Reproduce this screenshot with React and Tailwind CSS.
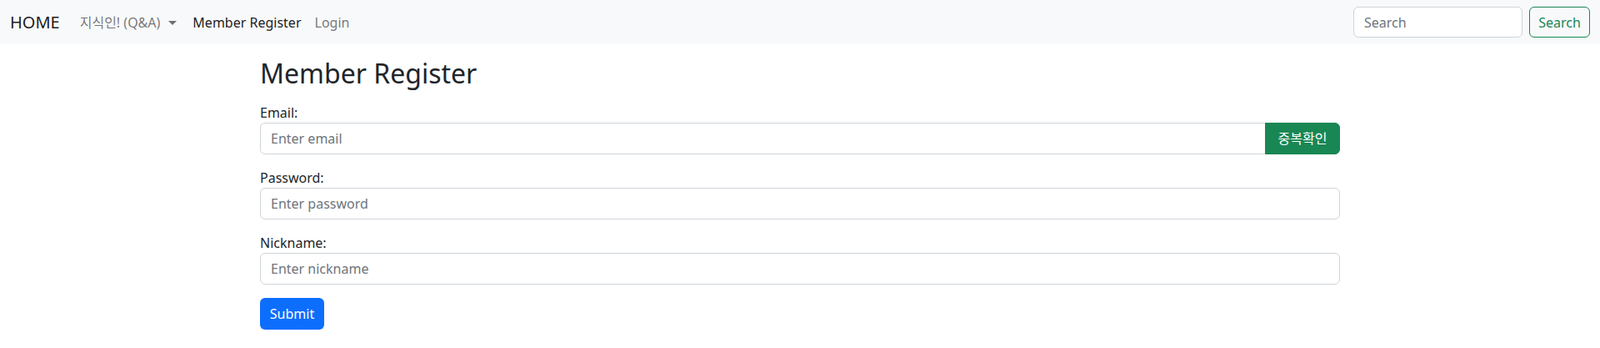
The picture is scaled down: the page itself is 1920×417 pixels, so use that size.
import React from 'react'

const font = { fontFamily: '"Noto Sans", "Noto Sans CJK KR", sans-serif' }

const Field = ({ label, placeholder, type = 'text', children }) => (
    <div className="mb-4">
        <label className="block text-base leading-6 text-[#212529]">{label}</label>
        <div className="flex">
            <input
                type={type}
                placeholder={placeholder}
                className={`h-[38px] flex-1 min-w-0 border border-[#ced4da] bg-white px-3 text-base text-[#212529] placeholder:text-[#6c757d] outline-none ${
                    children ? 'rounded-l-[6px]' : 'rounded-[6px]'
                }`}
            />
            {children}
        </div>
    </div>
)

export default function App() {
    return (
        <div className="min-h-[417px] bg-white" style={font}>
            <nav className="flex h-[53px] items-center justify-between bg-[#f8f9fa] px-3">
                <div className="flex items-center">
                    <a className="mr-4 text-[20px] leading-[30px] text-black/90">HOME</a>
                    <ul className="flex items-center text-base leading-6">
                        <li className="px-2 text-black/55">
                            지식인! (Q&amp;A)
                            <span className="ml-[10px] inline-block border-x-[5px] border-t-[5px] border-b-0 border-x-transparent align-[3px]" />
                        </li>
                        <li className="pl-[11px] pr-2 text-black/90">Member Register</li>
                        <li className="px-2 text-black/55">Login</li>
                    </ul>
                </div>
                <form className="flex items-center gap-2">
                    <input
                        placeholder="Search"
                        className="h-[37px] w-[203px] rounded-[6px] border border-[#ced4da] bg-white px-3 text-base placeholder:text-[#6c757d] outline-none"
                    />
                    <button
                        type="button"
                        className="h-[37px] w-[73px] rounded-[6px] border border-[#198754] text-base text-[#198754]"
                    >
                        Search
                    </button>
                </form>
            </nav>

            <div className="mx-auto w-[1296px] pt-4">
                <h2 className="mb-4 text-[32px] leading-[38px] font-normal text-[#212529]">Member Register</h2>
                <form>
                    <Field label="Email:" placeholder="Enter email" type="email">
                        <button
                            type="button"
                            className="-ml-px h-[38px] w-[90px] rounded-r-[6px] border border-[#198754] bg-[#198754] text-base text-white"
                        >
                            중복확인
                        </button>
                    </Field>
                    <Field label="Password:" placeholder="Enter password" type="password" />
                    <Field label="Nickname:" placeholder="Enter nickname" />
                    <button
                        type="button"
                        className="h-[38px] w-[77px] rounded-[6px] bg-[#0d6efd] text-base text-white"
                    >
                        Submit
                    </button>
                </form>
            </div>
        </div>
    )
}
